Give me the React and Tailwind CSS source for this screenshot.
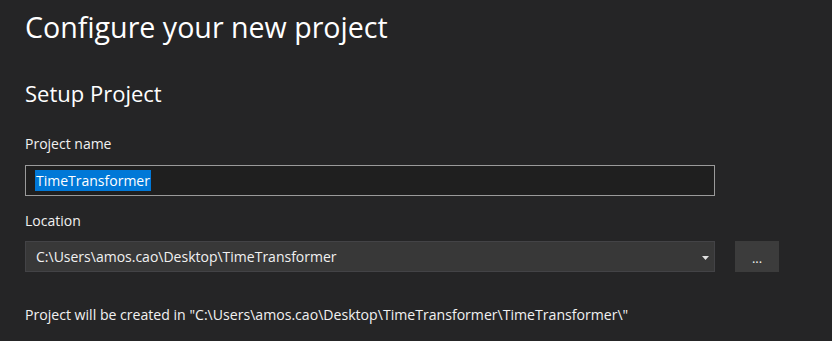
export default function App() {
  const font = { fontFamily: '"Open Sans", "Noto Sans", sans-serif' };
  return (
    <div className="w-[832px] h-[341px] bg-[#252526] text-[#f1f1f1] pl-[25px] overflow-hidden" style={font}>
      <div className="pt-[7px] text-[28.6px] leading-[40px] text-white">Configure your new project</div>
      <div className="mt-[31px] text-[22px] leading-[30px] text-white">Setup Project</div>
      <div className="mt-[26px] text-[14px] leading-[20px] text-[#f1f1f1]">Project name</div>
      <div className="mt-[11px] w-[690px] h-[31px] border border-[#9a9a9a] bg-[#1f1f1f] flex items-center pl-[9px]">
        <span className="bg-[#0078d7] text-white text-[14px] leading-[21px] px-[1px]">TimeTransformer</span>
      </div>
      <div className="mt-[15px] text-[14px] leading-[20px]">Location</div>
      <div className="mt-[10px] flex gap-[20px]">
        <div className="w-[690px] h-[31px] border border-[#434346] bg-[#383838] flex items-center pl-[10px] pr-[5px] justify-between">
          <span className="text-[14px] leading-[20px]">C:\Users\amos.cao\Desktop\TimeTransformer</span>
          <svg width="7" height="4" viewBox="0 0 7 4" className="mt-[2px]"><path d="M0 0h7L3.5 4z" fill="#e0e0e0" /></svg>
        </div>
        <div className="w-[44px] h-[31px] bg-[#3c3c3c] flex items-center justify-center text-[13px] leading-[18px] pt-[2px]">...</div>
      </div>
      <div className="mt-[33px] text-[14.1px] leading-[20px]">Project will be created in "C:\Users\amos.cao\Desktop\TimeTransformer\TimeTransformer\"</div>
    </div>
  );
}
